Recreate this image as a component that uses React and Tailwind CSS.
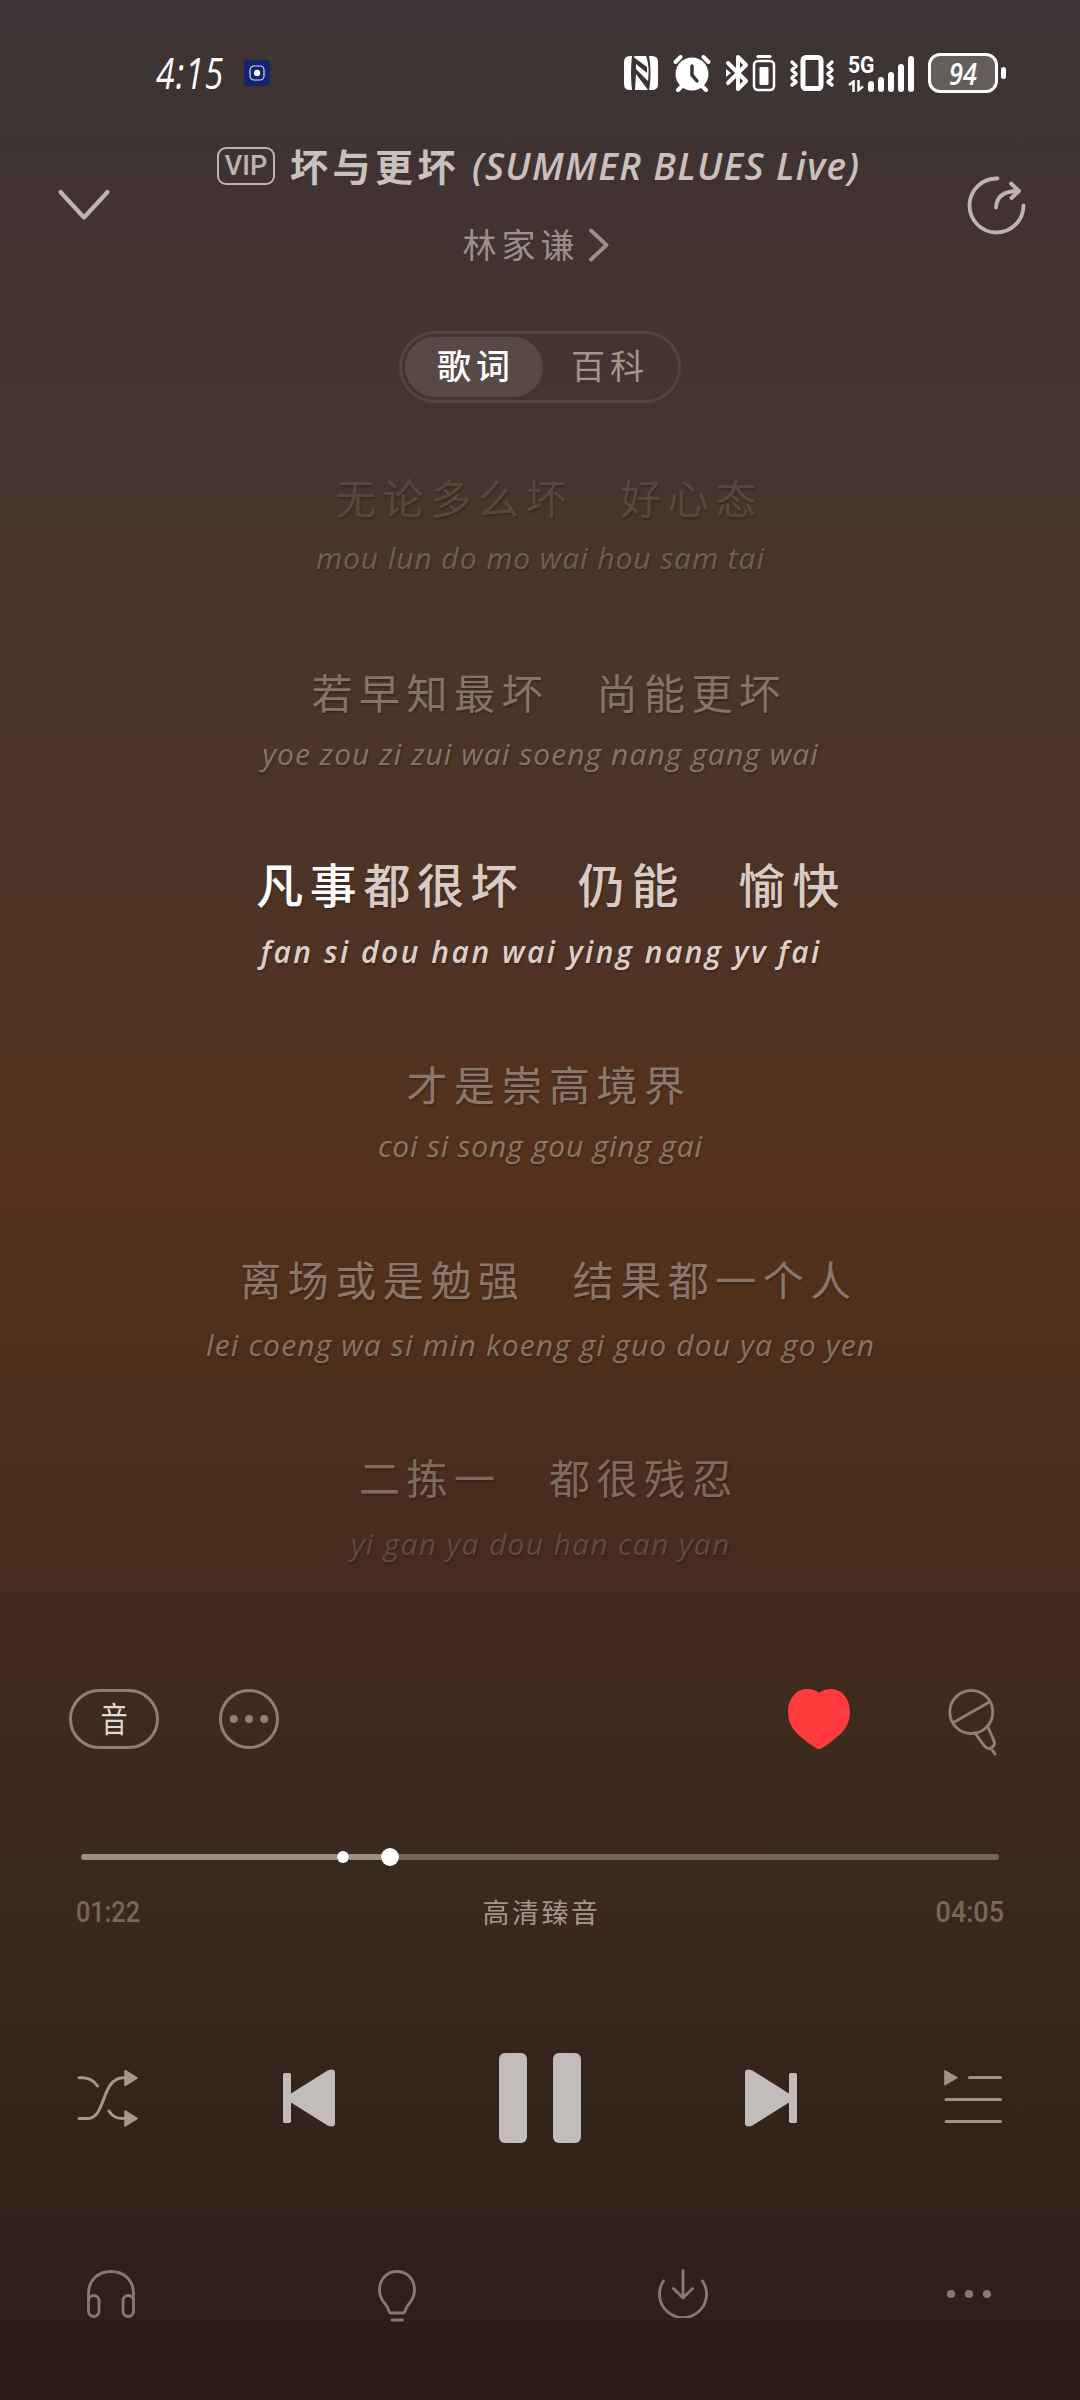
import { useLayoutEffect, useRef, useState } from "react";

const HAN = "font-['Open_Sans','Noto_Sans_CJK_SC',sans-serif]";

// Spreads a single line of text over a given width by adjusting its tracking.
function FitText({ width, className, children }) {
  const ref = useRef(null);
  const [spacing, setSpacing] = useState(0);
  useLayoutEffect(() => {
    const natural = ref.current.offsetWidth - spacing * children.length;
    setSpacing((width - natural) / (children.length - 1));
  }, []);
  return (
    <span
      ref={ref}
      className={"inline-block whitespace-pre " + className}
      style={{ letterSpacing: spacing, marginRight: -spacing }}
    >
      {children}
    </span>
  );
}

const LYRICS = [
  { text: "无论多么坏　好心态", roman: "mou lun do mo wai hou sam tai", width: 448, box: "", gap: "mt-4", color: "text-[#58473f]", romanColor: "text-[#6d5e56]" },
  { text: "若早知最坏　尚能更坏", roman: "yoe zou zi zui wai soeng nang gang wai", width: 556, box: "mt-[91px]", gap: "mt-[17px]", color: "text-[#83746d]", romanColor: "text-[#83746b]" },
  { sung: "凡事", text: "都很坏　仍能　愉快", roman: "fan si dou han wai ying nang yv fai", width: 559, box: "mt-[87px]", gap: "mt-[23px]", active: true, color: "text-[#d8cbc5]", romanColor: "text-[#dccfc8]" },
  { text: "才是崇高境界", roman: "coi si song gou ging gai", width: 324, box: "mt-[89px]", gap: "mt-[17px]", color: "text-[#8b786d]", romanColor: "text-[#8b776a]" },
  { text: "离场或是勉强　结果都一个人", roman: "lei coeng wa si min koeng gi guo dou ya go yen", width: 668, box: "mt-[90px]", gap: "mt-[21px]", color: "text-[#8a766a]", romanColor: "text-[#887366]" },
  { text: "二拣一　都很残忍", roman: "yi gan ya dou han can yan", width: 379, box: "mt-[89px]", gap: "mt-[22px]", color: "text-[#7f6b5e]", romanColor: "text-[#604a3c]" },
];

function Lyric({ line }) {
  return (
    <div className={"flex flex-col items-center [text-shadow:1px_2px_2px_rgba(0,0,0,0.22)] " + line.box}>
      <div
        className={
          "h-12 whitespace-pre leading-[48px] " +
          (line.active ? "pl-[22px] text-[47px] font-medium tracking-[6.6px] " : "pl-[18px] text-[41px] tracking-[6.5px] ") +
          line.color
        }
      >
        {line.sung && <span className="text-white">{line.sung}</span>}
        {line.text}
      </div>
      <div className={"h-10 text-[30px] italic leading-10 " + line.gap + " " + (line.active ? "font-semibold " : "font-medium ") + line.romanColor}>
        <FitText width={line.width} className="">{line.roman}</FitText>
      </div>
    </div>
  );
}

function StatusBar() {
  return (
    <div className="flex h-[112px] items-start justify-between pl-[156px] pr-[74px] pt-[53px] text-white">
      <div className="flex h-10 items-center">
        <span className="w-[69px] origin-left scale-x-[.78] whitespace-pre text-[43px] font-medium italic leading-10 tracking-[1.500px]">4:15</span>
        <svg className="ml-[19px] h-[26px] w-[26px]" viewBox="0 0 26 26" fill="none">
          <rect width="26" height="26" rx="4" fill="#15256b" />
          <rect x="6" y="6" width="14" height="14" rx="4" stroke="#cfd8ff" strokeWidth="1.2" />
          <circle cx="13" cy="13" r="3.2" fill="#fff" />
        </svg>
      </div>
      <div className="flex h-10 items-center">
        <svg className="h-[36px] w-[34px]" viewBox="0 0 34 36">
          <path d="M6 1h2q-2 17 0 34H6q-6 0-6-6V7q0-6 6-6zM25 1h3q6 0 6 6v22q0 6-6 6h-3c2-8 2-25 0-34z" fill="#fff" />
          <path d="M11 1h11c3 8 3 17 2 25L12 14v-5l11 9v-6L9.500 2zM12 19l12 16H11z" fill="#fff" />
        </svg>
        <svg className="ml-[15px] h-[38px] w-[38px]" viewBox="0 0 38 38" fill="none" stroke="#fff" strokeWidth="4" strokeLinecap="round">
          <circle cx="19" cy="20" r="16.500" fill="#fff" stroke="none" />
          <path d="M2.500 8l5-5M35.500 8l-5-5M9 32l-4 4M29 32l4 4" />
          <path d="M19 12v9l5 6" stroke="#3e3432" strokeWidth="3.500" />
        </svg>
        <svg className="ml-[14px] h-[38px] w-[51px]" viewBox="0 0 51 38" fill="none" stroke="#fff">
          <path d="M3 9l18 18-8 8V3l8 8L3 29" strokeWidth="4" strokeLinejoin="round" strokeLinecap="round" />
          <path d="M1 15l5 4-5 4z" fill="#fff" stroke="none" />
          <path d="M33 2.500h12" strokeWidth="3" strokeLinecap="round" />
          <rect x="29" y="7" width="20" height="29" rx="4" strokeWidth="2.500" />
          <rect x="34.500" y="13" width="9" height="18" rx="1" fill="#fff" stroke="none" />
        </svg>
        <svg className="ml-[13px] h-[38px] w-[46px]" viewBox="0 0 46 38" fill="none" stroke="#fff" strokeWidth="3.500" strokeLinecap="round" strokeLinejoin="round">
          <rect x="14" y="3.500" width="18" height="31" rx="3" strokeWidth="5" />
          <path d="M3 8l4 4-4 4 4 4-4 4 4 4-4 3M43 8l-4 4 4 4-4 4 4 4-4 4 4 3" />
        </svg>
        <div className="ml-[13px] flex h-[38px] w-[66px] items-end">
          <div className="flex h-[38px] w-[20px] flex-col">
            <span className="h-[23px] origin-left scale-x-[.88] font-['Roboto',sans-serif] text-[24px] font-bold leading-[22px]">5G</span>
            <svg className="mt-[3px] h-[12px] w-[17px]" viewBox="0 0 17 12" fill="none" stroke="#fff" strokeWidth="2.500">
              <path d="M1 5l4.500-3.500V12M10.500 0v10L15 6.500" />
            </svg>
          </div>
          <div className="flex h-[37px] items-end gap-1">
            <i className="h-[11px] w-1.5 rounded-full bg-white" />
            <i className="h-[15px] w-1.5 rounded-full bg-white" />
            <i className="h-5 w-1.5 rounded-full bg-white" />
            <i className="h-7 w-1.5 rounded-full bg-white" />
            <i className="h-9 w-1.5 rounded-full bg-white" />
          </div>
        </div>
        <div className="ml-[14px] flex h-10 w-[70px] items-center justify-center rounded-[12px] border-[3px] border-white bg-[#655d5b] leading-8">
          <span className="scale-x-[.82] text-[31px] font-semibold italic">94</span>
        </div>
        <i className="ml-[3px] h-3 w-[5px] rounded-full bg-white" />
      </div>
    </div>
  );
}

function Header() {
  return (
    <header className="flex h-[219px] items-start justify-between pl-[57px] pr-[53px]">
      <svg className="mt-[76px] h-[34px] w-[54px]" viewBox="0 0 54 34" fill="none" stroke="#bdb3b0" strokeWidth="4.200" strokeLinecap="round" strokeLinejoin="round">
        <path d="M3.500 4L27 29.500 50.500 4" />
      </svg>
      <div className="flex flex-col items-center pt-[29px]">
        <div className="flex h-[50px] items-center text-[#c9c1be]">
          <div className="flex h-[38px] w-[58px] items-center justify-center rounded-[9px] border-2 border-[#bdb3b0] font-['Roboto',sans-serif] text-[27px] font-medium leading-none text-[#bdb3b0]">
            VIP
          </div>
          <span className="ml-[15px] text-[38px] font-semibold leading-[50px] tracking-[4.500px]">坏与更坏</span>
          <FitText width={387} className="ml-[12px] text-[37px] font-semibold italic leading-[50px]">(SUMMER BLUES Live)</FitText>
        </div>
        <div className="mt-[34px] flex h-10 items-center pr-[3px] text-[#9a8f8b]">
          <span className="text-[34px] leading-10 tracking-[5px]">林家谦</span>
          <svg className="ml-[7px] h-[36px] w-[24px]" viewBox="0 0 24 36" fill="none" stroke="#9a8f8b" strokeWidth="3.800" strokeLinecap="round" strokeLinejoin="round">
            <path d="M4 3.500L19.500 18 4 32.500" />
          </svg>
        </div>
      </div>
      <svg className="mt-[62px] h-[62px] w-[62px]" viewBox="0 0 62 62" fill="none" stroke="#bdb3b0" strokeWidth="3.800" strokeLinecap="round" strokeLinejoin="round">
        <path d="M32.500 4.500A27 27 0 1 0 58.500 31.500" />
        <path d="M31 33.500C31.500 22 40 17 53 17M46 9.500L54 17 46.500 24" />
      </svg>
    </header>
  );
}

function Tabs() {
  return (
    <div className="ml-[399px] flex h-[72px] w-[282px] items-center rounded-full border-[3px] border-[#55453f] p-[3px] text-[34px] leading-[59px] tracking-[5px]">
      <div className="h-[60px] w-[138px] rounded-full bg-[#574945] pl-[32px] font-medium text-white">歌词</div>
      <div className="h-[60px] flex-1 pl-[28px] text-[#a3958e]">百科</div>
    </div>
  );
}

function Actions() {
  return (
    <div className="mt-[123px] flex h-[70px] items-start pl-[69px] text-[#8f7f74]">
      <div className="mt-[2px] flex h-[60px] w-[90px] items-center justify-center rounded-full border-[3px] border-[#8f7f74] leading-none text-[#e0d9d4]">
        <span className="scale-x-[.8] text-[34px] leading-none">音</span>
      </div>
      <svg className="ml-[60px] mt-[2px] h-[60px] w-[60px]" viewBox="0 0 60 60" fill="currentColor">
        <circle cx="30" cy="30" r="28.500" fill="none" stroke="currentColor" strokeWidth="3" />
        <circle cx="14.800" cy="30" r="4" />
        <circle cx="30" cy="30" r="4" />
        <circle cx="45.200" cy="30" r="4" />
      </svg>
      <svg className="ml-[508px] mt-[1px] h-[62px] w-[64px]" viewBox="0 0 64 62">
        <path d="M32 4.800C36 1.800 40 1 44 1 55 1 63 11 63 24 63 38 55 45 47 51.500 42 55.500 37 59 34 60.500Q32 61.500 30 60.500C27 59 22 55.500 17 51.500 9 45 1 38 1 24 1 11 9 1 20 1 24 1 28 1.800 32 4.800z" fill="#ff3b3b" />
      </svg>
      <svg className="ml-[97px] mt-[2px] h-[67px] w-[50px]" viewBox="0 0 50 67" fill="none" stroke="currentColor" strokeWidth="2.900" strokeLinecap="round">
        <circle cx="23.300" cy="23" r="21.500" />
        <path d="M5.500 33.500L40.500 13.500M27 44l9 12.500q3.500 4.500 7.500 2 4-2 2.500-6.500L39.500 37M43.500 60l3.500 5" />
      </svg>
    </div>
  );
}

function Progress() {
  return (
    <div className="mt-[90px] pl-[81px] pr-[81px]">
      <div className="flex h-5 items-center">
        <i className="h-1.5 w-[256px] rounded-l-full bg-[#9c8f89]" />
        <i className="h-3 w-3 rounded-full bg-white" />
        <i className="h-1.5 w-[32px] bg-[#9c8f89]" />
        <i className="h-[18px] w-[18px] rounded-full bg-white" />
        <i className="h-1.5 flex-1 rounded-r-full bg-[#74655c]" />
      </div>
      <div className="-mx-[5px] mt-[26px] flex h-[40px] items-center justify-between font-['Roboto',sans-serif] text-[29px] font-medium text-[#76675e]">
        <span className="w-[70px] origin-left scale-x-[.87]">01:22</span>
        <span className={"pl-[3px] text-[27px] font-normal tracking-[2.500px] text-[#a1958e] " + HAN}>高清臻音</span>
        <span className="flex w-[70px] origin-right scale-x-[.93] justify-end">04:05</span>
      </div>
    </div>
  );
}

function Transport() {
  return (
    <div className="mt-[120px] flex h-[90px] items-center pl-[76px]">
      <svg className="h-[60px] w-[64px]" viewBox="0 0 64 60" fill="none" stroke="#a3978f" strokeWidth="3" strokeLinecap="round">
        <path d="M3 9.800h4C14 10 18 13 21.500 18M3 50.500h9C30 50 25 10.500 47 9.800h2M33 43c3 5.500 7 7.500 15 7.500" />
        <path d="M49 2.500l12 7.500-12 7.500zM49 43l12 7.500L49 58z" fill="#a3978f" strokeWidth="1.500" strokeLinejoin="round" />
      </svg>
      <svg className="ml-[143px] h-[60px] w-[53px]" viewBox="0 0 53 60" fill="#c2bdbb">
        <rect x="0" y="5" width="8" height="50" rx="1.800" />
        <path d="M8 25.500L45 2.300Q52 0 52 5v50q0 5-7 2.700L8 34.500z" />
      </svg>
      <div className="ml-[163px] flex gap-[26px]">
        <i className="h-[90px] w-7 rounded-[6px] bg-[#c2bdbb]" />
        <i className="h-[90px] w-7 rounded-[6px] bg-[#c2bdbb]" />
      </div>
      <svg className="ml-[163px] h-[60px] w-[53px]" viewBox="0 0 53 60" fill="#c2bdbb">
        <rect x="45" y="5" width="8" height="50" rx="1.800" />
        <path d="M45 25.500L8 2.300Q1 0 1 5v50q0 5 7 2.700L45 34.500z" />
      </svg>
      <svg className="ml-[146px] h-[60px] w-[60px]" viewBox="0 0 60 60" fill="none" stroke="#9f928a" strokeWidth="3" strokeLinecap="round">
        <path d="M26.500 9.500h31M3 31.500h54.500M3 53.500h54.500" />
        <path d="M2 2.500l12.500 7.200L2 17z" fill="#9c958b" strokeWidth="1" stroke="#9c958b" strokeLinejoin="round" />
      </svg>
    </div>
  );
}

function BottomBar() {
  return (
    <div className="mt-[125px] flex h-[54px] items-start pl-[86px]">
      <svg className="mt-px h-[50px] w-[50px]" viewBox="0 0 50 50" fill="none" stroke="#857870" strokeWidth="2.900">
        <path d="M2.500 32V25C2.500 11 12 2.500 25 2.500S47.500 11 47.500 25V32" />
        <rect x="2.500" y="26.500" width="10.500" height="21" rx="5.250" />
        <rect x="37" y="26.500" width="10.500" height="21" rx="5.250" />
      </svg>
      <svg className="ml-[241px] mt-px h-[54px] w-[40px]" viewBox="0 0 40 54" fill="none" stroke="#857870" strokeWidth="2.900" strokeLinecap="round" strokeLinejoin="round">
        <path d="M20 2.500C9.500 2.500 2.500 10.500 2.500 21 2.500 33 10 34 11.500 41 12 43.500 13 44 14.500 44h11c1.500 0 2.500-.5 3-3 1.500-7 9-8 9-20C37.500 10.500 30.500 2.500 20 2.500zM15 51h10.500" />
      </svg>
      <svg className="ml-[240px] h-[50px] w-[52px]" viewBox="0 0 52 50" fill="none" stroke="#857870" strokeWidth="2.900" strokeLinecap="round" strokeLinejoin="round">
        <path d="M6.500 13A23.500 23.500 0 1 0 45.500 13M26 2.500V30M16.500 20.500L26 30l9.500-9.500" />
      </svg>
      <svg className="ml-[237px] mt-[20px] h-[12px] w-[48px]" viewBox="0 0 48 12" fill="#857870">
        <circle cx="5" cy="6" r="4.100" />
        <circle cx="23" cy="6" r="4.100" />
        <circle cx="41" cy="6" r="4.100" />
      </svg>
    </div>
  );
}

export default function App() {
  return (
    <div
      className={
        "flex h-[2400px] w-[1080px] flex-col overflow-hidden bg-[linear-gradient(180deg,#3d3435_0px,#403331_200px,#45352f_400px,#48362d_600px,#4b3529_750px,#4f3324_950px,#53321f_1080px,#56311b_1180px,#51301b_1300px,#4b2d1d_1450px,#452b1e_1600px,#3e2b1f_1720px,#3a291f_1880px,#33241b_2120px,#2d2018_2300px,#2c1d17_2400px)] " +
        HAN
      }
    >
      <StatusBar />
      <Header />
      <Tabs />
      <div className="mt-[71px] flex flex-col">
        {LYRICS.map((line) => (
          <Lyric key={line.roman} line={line} />
        ))}
      </div>
      <Actions />
      <Progress />
      <Transport />
      <BottomBar />
    </div>
  );
}
